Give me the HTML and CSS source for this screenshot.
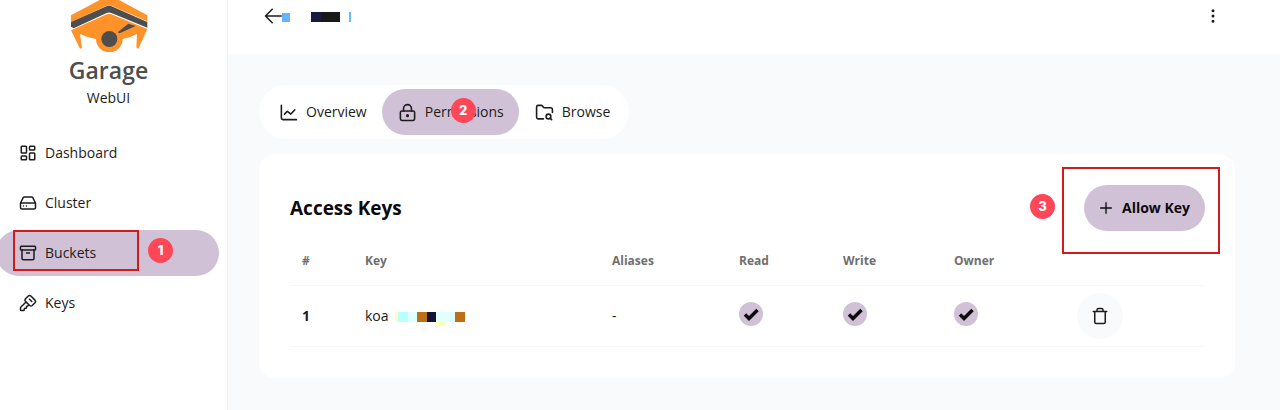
FILE: index.html
```html
<!DOCTYPE html>
<html lang="en">
<head>
    <meta charset="UTF-8">
    <meta name="viewport" content="width=device-width, initial-scale=1.0">
    <title>Garage WebUI</title>
    <link rel="stylesheet" href="styles.css">
</head>
<body>
    <div class="layout">
        <aside class="sidebar">
            <div class="brand">
                <svg class="logo" viewBox="60 0 232 156" aria-hidden="true">
                    <path fill="#ff9329" d="M62 46 148 0H206L291 46V64L186 19Q176 14 166 19L62 66Z"/>
                    <path fill="#4e4e4e" d="M62 66 165 20Q176 15 187 20L291 66V83L183 39Q176 36 169 39L70 85 62 80Z"/>
                    <path fill="#ff9329" d="M62 91 169 43Q176 40 183 43L291 87 264 147 258 142 260 102Q242 112 217 117A40 40 0 0 1 137 117Q112 113 89 102L95 144 89 146Z"/>
                    <circle cx="177" cy="117" r="24" fill="#4e4e4e"/>
                    <path fill="#4e4e4e" d="M202 97 234 71 256 78 208 100Z"/>
                </svg>
                <h1 class="brand-name">Garage</h1>
                <p class="brand-sub">WebUI</p>
            </div>
            <nav class="menu">
                <a class="menu-item" href="#dashboard">
                    <svg class="icon" viewBox="0 0 24 24"><rect x="3" y="3" width="7" height="9" rx="1"/><rect x="14" y="3" width="7" height="5" rx="1"/><rect x="14" y="12" width="7" height="9" rx="1"/><rect x="3" y="16" width="7" height="5" rx="1"/></svg>
                    Dashboard
                </a>
                <a class="menu-item" href="#cluster">
                    <svg class="icon" viewBox="0 0 24 24"><path d="M22 12H2M5.450 5.110 2 12v6a2 2 0 0 0 2 2h16a2 2 0 0 0 2-2v-6l-3.450-6.890A2 2 0 0 0 16.760 4H7.240a2 2 0 0 0-1.790 1.110zM6 16h.01M10 16h.01"/></svg>
                    Cluster
                </a>
                <a class="menu-item active" href="#buckets">
                    <svg class="icon" viewBox="0 0 24 24"><rect x="2" y="3" width="20" height="5" rx="1"/><path d="M4 8v11a2 2 0 0 0 2 2h12a2 2 0 0 0 2-2V8M10 12h4"/></svg>
                    Buckets
                    <span class="outline outline-menu"></span>
                    <span class="step step-menu">1</span>
                </a>
                <a class="menu-item" href="#keys">
                    <svg class="icon" viewBox="0 0 24 24"><path d="m12.400 2.700a2.500 2.500 0 0 1 3.400 0l5.500 5.500a2.500 2.500 0 0 1 0 3.400l-3.700 3.700a2.500 2.500 0 0 1-3.400 0L8.700 9.800a2.500 2.500 0 0 1 0-3.400zM14 7l3 3M9.400 10.600l-6.814 6.814A2 2 0 0 0 2 18.828V21a1 1 0 0 0 1 1h3a1 1 0 0 0 1-1v-1a1 1 0 0 1 1-1h1a1 1 0 0 0 1-1v-1a1 1 0 0 1 1-1h.172a2 2 0 0 0 1.414-.586l.814-.814"/></svg>
                    Keys
                </a>
            </nav>
        </aside>

        <div class="page">
            <header class="topbar">
                <button class="icon-btn" type="button" aria-label="Back">
                    <svg class="icon" viewBox="0 0 24 24"><path d="m11 3-9 9 9 9M2 12h21"/></svg>
                </button>
                <svg class="bucket-name" viewBox="0 0 72 12" aria-hidden="true">
                    <path fill="#66b3ff" d="M0 2h8v9H0z"/>
                    <path fill="#1a1a40" d="M29 1h10v10H29z"/>
                    <path fill="#191919" d="M39 1h19v10H39z"/>
                    <path fill="#66bbff" d="M67 1h2v10h-2z"/>
                </svg>
                <button class="icon-btn more" type="button" aria-label="More">
                    <svg class="icon" viewBox="0 0 24 24"><circle cx="12" cy="12" r="1"/><circle cx="12" cy="5" r="1"/><circle cx="12" cy="19" r="1"/></svg>
                </button>
            </header>

            <main class="content">
                <nav class="tabs">
                    <a class="tab" href="#overview">
                        <svg class="icon icon-lg" viewBox="0 0 24 24"><path d="M3 3v16a2 2 0 0 0 2 2h17M7 14l3.500-3.500 4.500 3.500 5-5.500"/></svg>
                        Overview
                    </a>
                    <a class="tab active" href="#permissions">
                        <svg class="icon icon-lg" viewBox="0 0 24 24"><rect x="3" y="10" width="18" height="12" rx="2"/><path d="M7 10V7a5 5 0 0 1 10 0v3"/><circle cx="12" cy="16" r="1"/></svg>
                        Permissions
                        <span class="step step-tab">2</span>
                    </a>
                    <a class="tab" href="#browse">
                        <svg class="icon icon-lg" viewBox="0 0 24 24"><path d="M10.700 20H4a2 2 0 0 1-2-2V5a2 2 0 0 1 2-2h3.900a2 2 0 0 1 1.690.9l.81 1.200a2 2 0 0 0 1.670.9H20a2 2 0 0 1 2 2v4.100M21 21l-1.900-1.900"/><circle cx="17" cy="17" r="3"/></svg>
                        Browse
                    </a>
                </nav>

                <section class="card">
                    <div class="card-head">
                        <h2>Access Keys</h2>
                        <div class="card-action">
                            <button class="btn" type="button">
                                <svg class="icon icon-sm" viewBox="0 0 24 24"><path d="M4 12h16M12 4v16"/></svg>
                                Allow Key
                            </button>
                            <span class="outline outline-action"></span>
                            <span class="step step-action">3</span>
                        </div>
                    </div>
                    <table class="keys">
                        <thead>
                            <tr>
                                <th class="col-no">#</th>
                                <th>Key</th>
                                <th class="col-alias">Aliases</th>
                                <th class="col-read">Read</th>
                                <th class="col-write">Write</th>
                                <th class="col-owner">Owner</th>
                                <th class="col-action"></th>
                            </tr>
                        </thead>
                        <tbody>
                            <tr>
                                <td class="no">1</td>
                                <td>
                                    <div class="key">
                                        koa
                                        <svg class="key-rest" viewBox="0 0 76 16" aria-hidden="true">
                                            <path fill="#ffffb3" d="M6 4h3v10H6zM47 14h10v4H47z"/>
                                            <path fill="#b8ffff" d="M9 4h10v10H9z"/>
                                            <path fill="#e0ffff" d="M19 4h9v10h-9zM47 4h19v10H47z"/>
                                            <path fill="#bd6e17" d="M28 4h10v10H28zM66 4h10v10H66z"/>
                                            <path fill="#14143a" d="M38 4h9v10h-9z"/>
                                        </svg>
                                    </div>
                                </td>
                                <td>-</td>
                                <td><input class="check" type="checkbox" aria-label="Read" checked></td>
                                <td><input class="check" type="checkbox" aria-label="Write" checked></td>
                                <td><input class="check" type="checkbox" aria-label="Owner" checked></td>
                                <td>
                                    <button class="trash" type="button" aria-label="Remove key">
                                        <svg class="icon" viewBox="0 0 24 24"><path d="M3 6h18M19 6v14a2 2 0 0 1-2 2H7a2 2 0 0 1-2-2V6M8 6V4a2 2 0 0 1 2-2h4a2 2 0 0 1 2 2v2"/></svg>
                                    </button>
                                </td>
                            </tr>
                        </tbody>
                    </table>
                </section>
            </main>
        </div>
    </div>
</body>
</html>
```
FILE: styles.css
```css
* {
    box-sizing: border-box;
}

body {
    margin: 0;
    font-family: 'Open Sans', 'Noto Sans', sans-serif;
    font-size: 14px;
    line-height: 20px;
    color: #1c1c1c;
    background: #f9fafc;
}

h1, h2, p {
    margin: 0;
}

a {
    color: inherit;
    text-decoration: none;
}

button {
    font: inherit;
    color: inherit;
    border: none;
    padding: 0;
    background: none;
    cursor: pointer;
}

.layout {
    display: flex;
    min-height: 100vh;
}

.icon {
    width: 18px;
    height: 18px;
    flex: none;
    fill: none;
    stroke: currentColor;
    stroke-width: 2;
    stroke-linecap: round;
    stroke-linejoin: round;
}

.icon-sm {
    width: 16px;
    height: 16px;
}

.icon-lg {
    width: 19px;
    height: 19px;
}

/* Sidebar */
.sidebar {
    width: 228px;
    flex: none;
    background: #fff;
    border-right: 1px solid #f1f1f3;
    overflow: hidden;
}

.brand {
    display: flex;
    flex-direction: column;
    align-items: center;
    padding-right: 10px;
}

.logo {
    width: 78px;
    height: 52px;
}

.brand-name {
    font-size: 23px;
    line-height: 36px;
    font-weight: 600;
    color: #4e4e4e;
}

.brand-sub {
    line-height: 20px;
}

.menu {
    display: flex;
    flex-direction: column;
    gap: 4px;
    margin: 22px 8px 0 -4px;
}

.menu-item {
    position: relative;
    display: flex;
    align-items: center;
    gap: 8px;
    height: 46px;
    padding: 0 23px;
    border-radius: 23px;
}

.active {
    background: #d1c1d7;
}

/* Top bar */
.page {
    flex: 1;
    min-width: 0;
}

.topbar {
    display: flex;
    align-items: flex-start;
    height: 54px;
    padding: 6px 58px 0 36px;
    background: #fff;
}

.icon-btn {
    display: flex;
    align-items: center;
    height: 20px;
}

.bucket-name {
    width: 72px;
    height: 12px;
    margin-top: 5px;
}

.more {
    margin-left: auto;
}

/* Content */
.content {
    padding: 31px 45px 31px 31px;
}

.tabs {
    display: flex;
    width: fit-content;
    padding: 4px;
    border-radius: 27px;
    background: #fff;
}

.tab {
    position: relative;
    display: flex;
    align-items: center;
    gap: 8px;
    height: 46px;
    padding: 0 15px 0 16px;
    border-radius: 23px;
}

.card {
    margin-top: 15px;
    padding: 31px 30px 31px 31px;
    border-radius: 16px;
    background: #fff;
}

.card-head {
    display: flex;
    align-items: center;
    justify-content: space-between;
}

.card-head h2 {
    font-size: 19px;
    line-height: 28px;
    font-weight: 700;
    color: #0d0a0e;
}

.card-action {
    position: relative;
}

.btn {
    display: flex;
    align-items: center;
    gap: 8px;
    height: 46px;
    padding: 0 15px 0 14px;
    border-radius: 23px;
    font-weight: 700;
    color: #0d0a0e;
    background: #d1c1d7;
}

/* Keys table */
.keys {
    width: 100%;
    margin-top: 6px;
    border-collapse: collapse;
    table-layout: fixed;
    text-align: left;
}

.keys th, .keys td {
    padding: 0 12px;
    border-bottom: 1px solid #f6f7f9;
}

.keys th {
    height: 48px;
    font-size: 12px;
    font-weight: 700;
    color: #6f6f6f;
}

.keys td {
    height: 61px;
}

.col-no { width: 63px; }
.col-alias { width: 127px; }
.col-read { width: 104px; }
.col-write { width: 111px; }
.col-owner { width: 123px; }
.col-action { width: 140px; }

.keys .no {
    font-weight: 700;
}

.key {
    display: flex;
    align-items: center;
}

.key-rest {
    width: 76px;
    height: 16px;
    overflow: visible;
}

.check {
    appearance: none;
    display: block;
    width: 24px;
    height: 24px;
    margin: 0 0 4px;
    border-radius: 50%;
    background: #d1c1d7 url("data:image/svg+xml,%3Csvg xmlns='http://www.w3.org/2000/svg' viewBox='0 0 24 24'%3E%3Cpath d='M6 12.500l4 4L18.500 8' fill='none' stroke='%230d0a0e' stroke-width='3.500'/%3E%3C/svg%3E") center / 100%;
}

.trash {
    display: flex;
    align-items: center;
    justify-content: center;
    width: 46px;
    height: 46px;
    border-radius: 50%;
    background: #f9fafc;
}

/* Walkthrough marks */
.outline {
    position: absolute;
    border: 2px solid #d01c1c;
    pointer-events: none;
}

.outline-menu {
    left: 17px;
    top: 0;
    width: 126px;
    height: 41px;
}

.outline-action {
    inset: -18px -15px -23px -22px;
}

.step {
    position: absolute;
    width: 25px;
    height: 25px;
    border-radius: 50%;
    background: #ff4757;
    color: #fff;
    font-family: Inter, sans-serif;
    font-size: 13px;
    line-height: 25px;
    font-weight: 800;
    text-align: center;
}

.step-menu {
    left: 152px;
    top: 8px;
}

.step-tab {
    left: 69px;
    top: 9px;
}

.step-action {
    left: -54px;
    top: 9px;
}
```
